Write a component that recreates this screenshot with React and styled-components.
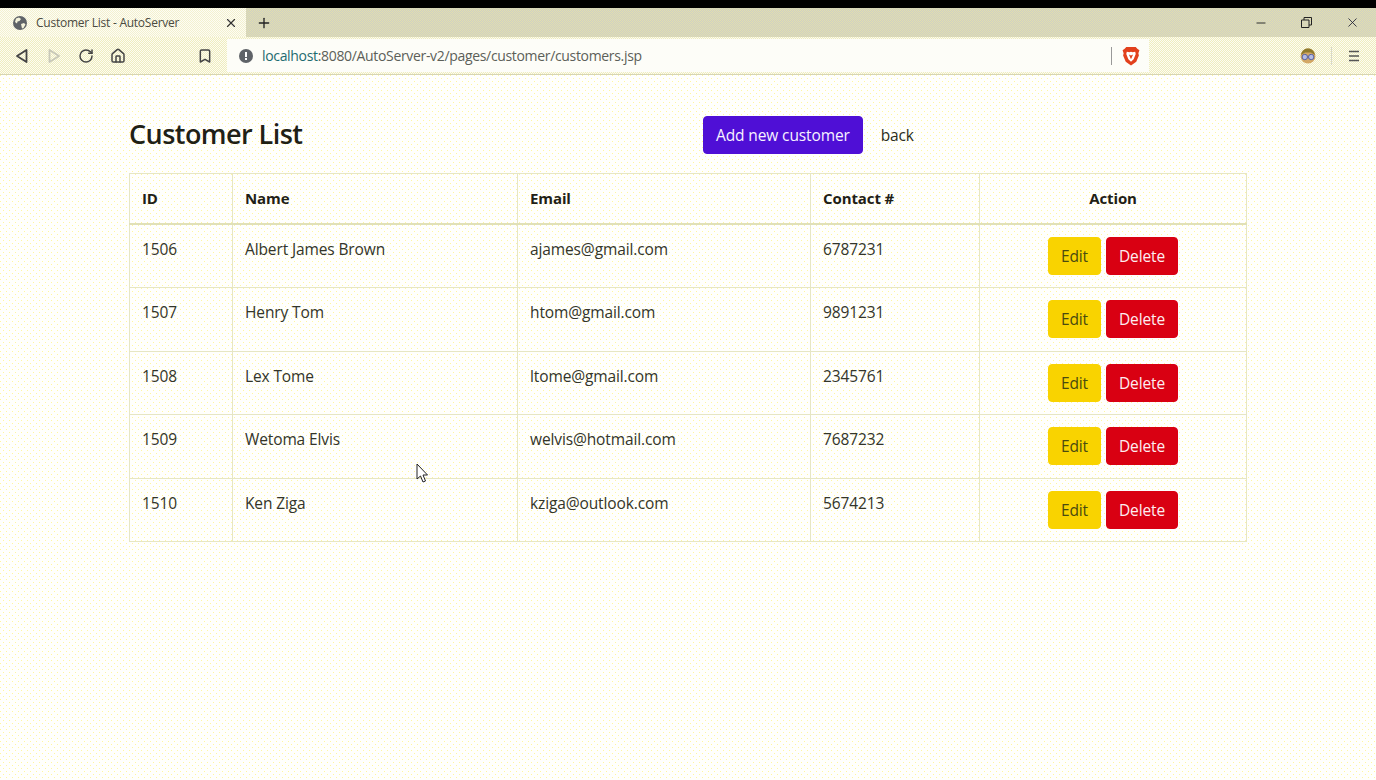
import React from 'react';
import styled, { createGlobalStyle } from 'styled-components';
import { Plus, X, RotateCw, Home, Bookmark, Minus } from 'lucide-react';

const customers = [
  { id: 1506, name: 'Albert James Brown', email: 'ajames@gmail.com', contact: '6787231' },
  { id: 1507, name: 'Henry Tom', email: 'htom@gmail.com', contact: '9891231' },
  { id: 1508, name: 'Lex Tome', email: 'ltome@gmail.com', contact: '2345761' },
  { id: 1509, name: 'Wetoma Elvis', email: 'welvis@hotmail.com', contact: '7687232' },
  { id: 1510, name: 'Ken Ziga', email: 'kziga@outlook.com', contact: '5674213' },
];

const GlobalStyle = createGlobalStyle`
  html, body {
    margin: 0;
    padding: 0;
    height: 100%;
    overflow: hidden;
    background: #fffffa;
  }
  * { box-sizing: border-box; }
`;

const Window = styled.div`
  width: 1376px;
  height: 780px;
  position: relative;
  display: flex;
  flex-direction: column;
  font-family: 'Open Sans', 'Noto Sans', sans-serif;
  color: #212529;
`;

const TopEdge = styled.div`
  height: 8px;
  background: #000;
`;

const TabBar = styled.div`
  height: 29px;
  display: flex;
  align-items: center;
  background: repeating-conic-gradient(#cfd0c4 0 25%, #e2dfae 0 50%) 0 0 / 2px 2px;
`;

const Tab = styled.div`
  width: 246px;
  height: 29px;
  padding: 0 8px 0 13px;
  display: flex;
  align-items: center;
  gap: 9px;
  background: repeating-conic-gradient(#fdfcf4 0 25%, #f3f1cf 0 50%) 0 0 / 2px 2px;
`;

const TabTitle = styled.span`
  flex: 1;
  font-size: 12px;
  letter-spacing: -0.25px;
  color: #4a4a40;
`;

const NewTab = styled.div`
  width: 36px;
  display: flex;
  justify-content: center;
  color: #222;
`;

const WindowControls = styled.div`
  margin-left: auto;
  display: flex;
  align-items: center;
  gap: 33px;
  padding-right: 16px;
  color: #222;
`;

const Toolbar = styled.div`
  height: 38px;
  display: flex;
  align-items: center;
  padding-left: 14px;
  background: repeating-conic-gradient(#fdfcf2 0 25%, #efedbe 0 50%) 0 0 / 2px 2px;
  border-bottom: 1px solid #d6d5b4;
`;

const NavButton = styled.div`
  width: 16px;
  height: 16px;
  margin-right: ${({ $gap }) => $gap}px;
  display: flex;
  align-items: center;
  justify-content: center;
  color: ${({ $muted }) => ($muted ? '#c8c8b8' : '#444')};
`;

const AddressBar = styled.div`
  width: 922px;
  height: 33px;
  margin-right: 151px;
  display: flex;
  align-items: center;
  padding: 0 9px 0 12px;
  background: #fdfdf8;
`;

const AddressText = styled.span`
  margin-left: 9px;
  flex: 1;
  font-size: 14px;
  letter-spacing: -0.33px;
  color: #5c5f58;
  b {
    font-weight: 400;
    color: #1d6b70;
  }
`;

const AddressDivider = styled.span`
  width: 1px;
  height: 18px;
  margin-right: 10px;
  background: #999;
`;

const ToolbarDivider = styled.span`
  width: 1px;
  height: 18px;
  margin: 0 14px 0 15px;
  background: #d8d8c8;
`;

const Page = styled.main`
  flex: 1;
  background-color: #fffffd;
  background-image:
    radial-gradient(circle at 0.5px 0.5px, #fff6a0 0.7px, transparent 0.7px),
    radial-gradient(circle at 3.5px 3.5px, #fff6a0 0.7px, transparent 0.7px);
  background-size: 6px 6px;
  padding-top: 41px;
`;

const Container = styled.div`
  width: 1118px;
  margin: 0 auto;
`;

const Heading = styled.div`
  display: grid;
  grid-template-columns: 574px auto auto 1fr;
  align-items: center;
  margin-bottom: 19px;
`;

const Title = styled.h2`
  margin: 0 0 2px;
  font-size: 27px;
  font-weight: 600;
  letter-spacing: -0.55px;
  line-height: 36px;
  color: #1f2116;
`;

const Button = styled.button`
  height: 38px;
  padding: 0 12px;
  border: 1px solid ${({ $bg }) => $bg};
  border-radius: 4px;
  background: ${({ $bg }) => $bg};
  color: ${({ $fg }) => $fg};
  font-family: inherit;
  font-size: 15.5px;
  letter-spacing: -0.12px;
`;

const BackLink = styled.a`
  margin-left: 18px;
  font-size: 15.5px;
  letter-spacing: -0.12px;
  color: #2a2c20;
`;

const Table = styled.table`
  width: 1117px;
  table-layout: fixed;
  border-collapse: collapse;
  font-size: 15.5px;
  letter-spacing: -0.12px;
`;

const HeadCell = styled.th`
  height: 50.5px;
  padding: 11px 12px 12px;
  text-align: ${({ $center }) => ($center ? 'center' : 'left')};
  font-weight: 700;
  font-size: 15px;
  letter-spacing: -0.1px;
  color: #1f2116;
  border: 1px solid #e6e6c4;
  border-bottom: 2px solid #e0e0b8;
`;

const Cell = styled.td`
  height: 63.5px;
  padding: 12px;
  vertical-align: top;
  line-height: 24px;
  color: #33352a;
  border: 1px solid #e6e6c4;
`;

const Actions = styled.div`
  display: flex;
  justify-content: center;
  gap: 5px;
`;

const Cursor = styled.svg`
  position: absolute;
  left: 416px;
  top: 463px;
`;

const Globe = () => (
  <svg width="14" height="14" viewBox="0 0 14 14">
    <circle cx="7" cy="7" r="7" fill="#5f6368" />
    <path d="M3 2.500l3-1 2 1.500-1.500 2-2 .5-.5 2-2-1.500zM8 8l3-1 1.500 1.500L10.500 12 9 12.500z" fill="#f4f3dc" />
  </svg>
);

const BackIcon = ({ flip }) => (
  <svg width="14" height="16" viewBox="0 0 14 16" style={flip ? { transform: 'scaleX(-1)' } : undefined}>
    <path d="M11.500 2v12L2 8z" fill="none" stroke="currentColor" strokeWidth="1.800" strokeLinejoin="round" />
  </svg>
);

const InfoIcon = () => (
  <svg width="14" height="14" viewBox="0 0 14 14">
    <circle cx="7" cy="7" r="7" fill="#5f6368" />
    <rect x="6" y="3" width="2" height="5" fill="#fff" />
    <rect x="6" y="9" width="2" height="2" fill="#fff" />
  </svg>
);

const BraveIcon = () => (
  <svg width="18" height="20" viewBox="0 0 17 19">
    <path d="M4 1h9l1.500 1.500L16.500 4l-1 3 .5 2-2.500 6-5 3.500L3.500 15 1 9l.5-2-1-3L2.500 2.500z" fill="#e2401c" />
    <path d="M4.500 5.500L7 6l1.500-.5L10 6l2.500-.5.500 2-2 5-2.500 2.500L6 12.500l-2-5z" fill="#fff" />
    <path d="M6.500 8l2 4.500L10.500 8 8.500 9z" fill="#e2401c" />
  </svg>
);

const AvatarIcon = () => (
  <svg width="16" height="16" viewBox="0 0 16 16">
    <circle cx="8" cy="8" r="7.500" fill="#d3a866" />
    <path d="M1 7C2 2 5 .500 8 .500S14 2 15 7L11 4.500H5z" fill="#8f7a2c" />
    <circle cx="4.800" cy="9" r="2.700" fill="#b4bde6" stroke="#5a62a0" />
    <circle cx="11.200" cy="9" r="2.700" fill="#b4bde6" stroke="#5a62a0" />
  </svg>
);

const MenuIcon = () => (
  <svg width="12" height="12" viewBox="0 0 12 12">
    <path d="M1 1.500h10M1 6h10M1 10.500h10" stroke="#555" strokeWidth="1.500" />
  </svg>
);

const RestoreIcon = () => (
  <svg width="11" height="11" viewBox="0 0 11 11">
    <path d="M.500 3h7.500v7.500H.500zM3 3V.500h7.500V8H8" fill="none" stroke="#222" />
  </svg>
);

const App = () => (
  <Window>
    <GlobalStyle />
    <TopEdge />
    <TabBar>
      <Tab>
        <Globe />
        <TabTitle>Customer List - AutoServer</TabTitle>
        <X size={14} strokeWidth={2} color="#333" />
      </Tab>
      <NewTab>
        <Plus size={16} strokeWidth={2} />
      </NewTab>
      <WindowControls>
        <Minus size={14} strokeWidth={1.6} />
        <RestoreIcon />
        <X size={15} strokeWidth={1.3} />
      </WindowControls>
    </TabBar>
    <Toolbar>
      <NavButton $gap={16}><BackIcon /></NavButton>
      <NavButton $gap={16} $muted><BackIcon flip /></NavButton>
      <NavButton $gap={16}><RotateCw size={16} strokeWidth={2.2} /></NavButton>
      <NavButton $gap={71}><Home size={16} strokeWidth={2.2} /></NavButton>
      <NavButton $gap={14}><Bookmark size={16} strokeWidth={2.2} /></NavButton>
      <AddressBar>
        <InfoIcon />
        <AddressText>
          <b>localhost</b>:8080/AutoServer-v2/pages/customer/customers.jsp
        </AddressText>
        <AddressDivider />
        <BraveIcon />
      </AddressBar>
      <NavButton $gap={0}><AvatarIcon /></NavButton>
      <ToolbarDivider />
      <NavButton $gap={0}><MenuIcon /></NavButton>
    </Toolbar>
    <Page>
      <Container>
        <Heading>
          <Title>Customer List</Title>
          <Button $bg="#4f0fd6" $fg="#f7f2ff">Add new customer</Button>
          <BackLink>back</BackLink>
        </Heading>
        <Table>
          <colgroup>
            <col width="103" />
            <col width="285" />
            <col width="293" />
            <col width="169" />
            <col width="267" />
          </colgroup>
          <thead>
            <tr>
              <HeadCell>ID</HeadCell>
              <HeadCell>Name</HeadCell>
              <HeadCell>Email</HeadCell>
              <HeadCell>Contact #</HeadCell>
              <HeadCell $center>Action</HeadCell>
            </tr>
          </thead>
          <tbody>
            {customers.map((c) => (
              <tr key={c.id}>
                <Cell>{c.id}</Cell>
                <Cell>{c.name}</Cell>
                <Cell>{c.email}</Cell>
                <Cell>{c.contact}</Cell>
                <Cell>
                  <Actions>
                    <Button $bg="#f9d300" $fg="#4a4a10">Edit</Button>
                    <Button $bg="#d90012" $fg="#fdeef0">Delete</Button>
                  </Actions>
                </Cell>
              </tr>
            ))}
          </tbody>
        </Table>
      </Container>
    </Page>
    <Cursor width="13" height="21" viewBox="0 0 13 21">
      <path d="M1 1v15l3.500-3 2.500 6 2.500-1-2.500-6H11.500z" fill="#fff" stroke="#222" strokeWidth="1" />
    </Cursor>
  </Window>
);

export default App;
